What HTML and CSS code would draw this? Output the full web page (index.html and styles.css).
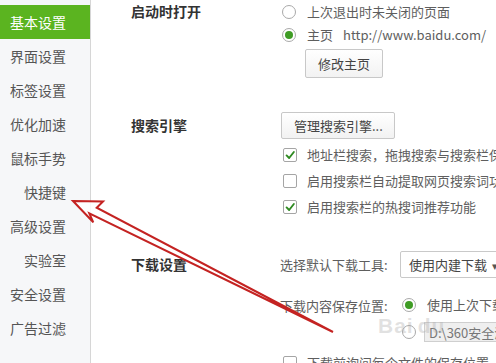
FILE: index.html
```html
<!DOCTYPE html>
<html lang="zh-CN">
<head>
<meta charset="utf-8">
<title>基本设置</title>
<link rel="stylesheet" href="styles.css">
</head>
<body>
<div class="app">
  <nav class="side">
    <div class="nav-item active">基本设置</div>
    <div class="nav-item">界面设置</div>
    <div class="nav-item">标签设置</div>
    <div class="nav-item">优化加速</div>
    <div class="nav-item">鼠标手势</div>
    <div class="nav-item">快捷键</div>
    <div class="nav-item">高级设置</div>
    <div class="nav-item">实验室</div>
    <div class="nav-item">安全设置</div>
    <div class="nav-item">广告过滤</div>
  </nav>
  <main class="main">
    <section class="sec sec-start">
      <div class="sec-title t23">启动时打开</div>
      <div class="sec-body">
        <div class="row r23"><span class="radio"></span><span class="lbl">上次退出时未关闭的页面</span></div>
        <div class="row r23"><span class="radio on"></span><span class="lbl">主页</span><span class="url">http://www.baidu.com/</span></div>
        <button class="btn btn-home">修改主页</button>
      </div>
    </section>
    <section class="sec sec-search">
      <div class="sec-title t27">搜索引擎</div>
      <div class="sec-body">
        <button class="btn btn-engine">管理搜索引擎...</button>
        <div class="checks">
          <div class="row r26"><span class="check on"><svg viewBox="0 0 14 14"><polyline points="3,7.5 6,10.5 11.5,3.5"/></svg></span><span class="lbl">地址栏搜索，拖拽搜索与搜索栏保持一致</span></div>
          <div class="row r26"><span class="check"></span><span class="lbl">启用搜索栏自动提取网页搜索词功能</span></div>
          <div class="row r26"><span class="check on"><svg viewBox="0 0 14 14"><polyline points="3,7.5 6,10.5 11.5,3.5"/></svg></span><span class="lbl">启用搜索栏的热搜词推荐功能</span></div>
        </div>
      </div>
    </section>
    <section class="sec sec-download">
      <div class="sec-title t27">下载设置</div>
      <div class="sec-body">
        <div class="row r27"><span class="field-lbl">选择默认下载工具:</span><span class="select">使用内建下载<span class="caret">▾</span></span></div>
        <div class="row r26 mt14"><span class="field-lbl">下载内容保存位置:</span><span class="radio on"></span><span class="lbl">使用上次下载目录</span></div>
        <div class="row r28"><span class="field-lbl"></span><span class="radio"></span><span class="path">D:\360安全浏览器下载</span></div>
        <div class="row r26 mt4"><span class="check"></span><span class="lbl">下载前询问每个文件的保存位置</span></div>
      </div>
    </section>
  </main>
</div>
<div class="watermark">Bai<span class="paw">du</span></div>
<svg class="arrow" width="496" height="363" viewBox="0 0 496 363">
  <polygon points="73,201 103,201.5 96.7,207.7 333,332 89.3,213.3 93.3,222.3"/>
</svg>
</body>
</html>
```

FILE: styles.css
```css
html, body {
  margin: 0;
  padding: 0;
}
body {
  width: 496px;
  height: 363px;
  overflow: hidden;
  position: relative;
  background: #fff;
  font-family: "Noto Sans CJK SC", "Microsoft YaHei", "Noto Sans", sans-serif;
  color: #5e5e5e;
  font-size: 13px;
}
.app {
  display: flex;
  height: 363px;
}
.side {
  flex: 0 0 90px;
  width: 90px;
  background: #f6f7f9;
  border-right: 1px solid #d6d6d6;
  padding-top: 5px;
}
.nav-item {
  height: 34px;
  line-height: 34px;
  font-size: 14px;
  color: #555;
  text-align: right;
  padding-right: 24px;
  white-space: nowrap;
}
.nav-item.active {
  background: #5bb420;
  color: #fff;
}
.main {
  flex: 1;
  padding-left: 40px;
  min-width: 0;
  display: flex;
  flex-direction: column;
}
.sec {
  display: flex;
  align-items: flex-start;
  flex: 0 0 auto;
}
.sec-start { height: 78px; }
.sec-search { margin-top: 34px; height: 108px; }
.sec-download { margin-top: 31px; }
.sec-title {
  flex: 0 0 150px;
  font-size: 14px;
  font-weight: bold;
  color: #333;
  white-space: nowrap;
}
.t23 { line-height: 23px; }
.t27 { line-height: 27px; }
.sec-body {
  display: flex;
  flex-direction: column;
  align-items: flex-start;
  white-space: nowrap;
}
.row {
  display: flex;
  align-items: center;
  white-space: nowrap;
  flex: 0 0 auto;
}
.r23 { height: 23px; }
.r26 { height: 26px; }
.r27 { height: 27px; }
.r28 { height: 28px; }
.mt14 { margin-top: 14px; }
.mt4 { margin-top: 4px; }
.lbl { line-height: 18px; }
.url { margin-left: 10px; }
.radio {
  width: 14px;
  height: 14px;
  box-sizing: border-box;
  border: 1px solid #a9a9a9;
  border-radius: 50%;
  background: #fff;
  margin-left: 1px;
  margin-right: 11px;
  display: flex;
  align-items: center;
  justify-content: center;
  flex: 0 0 auto;
}
.radio.on::after {
  content: "";
  width: 8px;
  height: 8px;
  border-radius: 50%;
  background: #3f9c25;
}
.check {
  width: 14px;
  height: 14px;
  box-sizing: border-box;
  border: 1px solid #a5a5a5;
  border-radius: 2px;
  background: #fff;
  margin-left: 2px;
  margin-right: 10px;
  flex: 0 0 auto;
  display: flex;
}
.check svg {
  width: 12px;
  height: 12px;
}
.check polyline {
  fill: none;
  stroke: #2f8a21;
  stroke-width: 2.2;
  stroke-linecap: round;
  stroke-linejoin: round;
}
.btn {
  font-family: inherit;
  font-size: 13px;
  color: #444;
  background: linear-gradient(#ffffff, #f2f2f2);
  border: 1px solid #c8c8c8;
  border-radius: 2px;
  padding: 0;
  margin: 0;
  flex: 0 0 auto;
}
.btn-home {
  margin-left: 24px;
  margin-top: 3px;
  width: 78px;
  height: 29px;
}
.btn-engine {
  width: 114px;
  height: 27px;
  text-align: left;
  padding-left: 12px;
}
.checks {
  margin-top: 3px;
  display: flex;
  flex-direction: column;
  flex: 0 0 auto;
}
.field-lbl {
  width: 120px;
  margin-left: -1px;
  flex: 0 0 auto;
}
.select {
  height: 27px;
  box-sizing: border-box;
  width: 112px;
  border: 1px solid #c9c9c9;
  border-radius: 2px;
  background: #fff;
  display: flex;
  align-items: center;
  padding-left: 8px;
  color: #444;
}
.caret {
  margin-left: 5px;
  font-size: 11px;
  color: #555;
}
.sec-download .radio {
  margin-left: 2px;
  margin-right: 11px;
}
.path {
  margin-left: -3px;
  height: 20px;
  line-height: 20px;
  box-sizing: border-box;
  padding: 0 4px;
  width: 120px;
  background: #efefef;
  border: 1px solid #cfcfcf;
  color: #777;
  overflow: hidden;
}
.watermark {
  position: absolute;
  left: 378px;
  top: 314px;
  font-family: "Liberation Sans", Arial, sans-serif;
  font-size: 21px;
  font-weight: bold;
  color: rgba(170, 170, 170, 0.35);
  letter-spacing: 1px;
  pointer-events: none;
}
.paw {
  margin-left: 4px;
}
.arrow {
  position: absolute;
  left: 0;
  top: 0;
  pointer-events: none;
}
.arrow polygon {
  fill: rgba(255, 255, 255, 0.85);
  stroke: #c42322;
  stroke-width: 2;
  stroke-linejoin: miter;
}
```
